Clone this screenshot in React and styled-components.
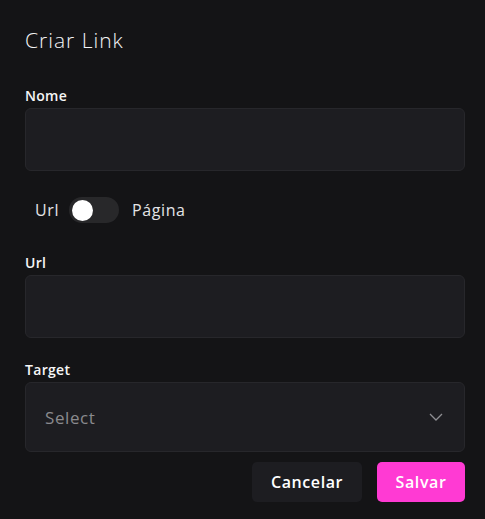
import React, { useState } from "react";
import styled, { createGlobalStyle } from "styled-components";

const Global = createGlobalStyle`
  html, body { margin: 0; padding: 0; background: #141416; }
  body { font-family: "Open Sans", "Noto Sans", sans-serif; color: #f2f2f2; }
  * { box-sizing: border-box; }
`;

const Page = styled.div`
  width: 485px;
  height: 519px;
  padding: 26px 20px 0 25px;
  display: flex;
  flex-direction: column;
`;

const Title = styled.h1`
  margin: 0;
  font-size: 21px;
  line-height: 28px;
  font-weight: 300;
  letter-spacing: 1px;
  color: #f4f4f6;
`;

const Field = styled.div`
  display: flex;
  flex-direction: column;
  gap: 2px;
  margin-top: ${(p) => p.$top}px;
`;

const Label = styled.label`
  font-size: 14px;
  line-height: 20px;
  font-weight: 600;
  letter-spacing: 0.3px;
  color: #f6f6f6;
`;

const Input = styled.input`
  width: 440px;
  height: 63px;
  background: #1d1d21;
  border: 1px solid #27272b;
  border-radius: 6px;
  outline: none;
  color: #eee;
  font: inherit;
  padding: 0 19px;
`;

const SelectBox = styled.div`
  width: 440px;
  height: 70px;
  background: #1d1d21;
  border: 1px solid #27272b;
  border-radius: 6px;
  display: flex;
  align-items: center;
  justify-content: space-between;
  padding: 0 21px 0 19px;
`;

const Placeholder = styled.span`
  font-size: 17px;
  letter-spacing: 0.6px;
  color: #8a8a8e;
`;

const ToggleRow = styled.div`
  margin-top: 26px;
  height: 26px;
  display: flex;
  align-items: center;
  padding-left: 10px;
  font-size: 16px;
  font-weight: 500;
  letter-spacing: 0.6px;
  color: #e4e4e6;
`;

const Track = styled.button`
  width: 50px;
  height: 26px;
  margin: 0 13px 0 10px;
  border-radius: 13px;
  border: none;
  background: #28282a;
  padding: 0 3px;
  display: flex;
  align-items: center;
  justify-content: ${(p) => (p.$on ? "flex-end" : "flex-start")};
  cursor: pointer;
`;

const Knob = styled.span`
  width: 21px;
  height: 21px;
  border-radius: 50%;
  background: #ffffff;
`;

const Actions = styled.div`
  margin-top: 10px;
  display: flex;
  justify-content: flex-end;
  gap: 15px;
`;

const Button = styled.button`
  height: 40px;
  width: ${(p) => p.$w}px;
  border: none;
  border-radius: 5px;
  font: inherit;
  font-size: 16px;
  font-weight: 600;
  letter-spacing: 0.6px;
  color: #fff;
  background: ${(p) => (p.$primary ? "#ff3ad3" : "#1d1d21")};
  cursor: pointer;
`;

export default function App() {
  const [on, setOn] = useState(false);
  return (
    <Page>
      <Global />
      <Title>Criar Link</Title>
      <Field $top={32}>
        <Label>Nome</Label>
        <Input />
      </Field>
      <ToggleRow>
        <span>Url</span>
        <Track $on={on} onClick={() => setOn(!on)}>
          <Knob />
        </Track>
        <span>Página</span>
      </ToggleRow>
      <Field $top={30}>
        <Label>Url</Label>
        <Input />
      </Field>
      <Field $top={22}>
        <Label>Target</Label>
        <SelectBox>
          <Placeholder>Select</Placeholder>
          <svg width="14" height="8" viewBox="0 0 14 8" fill="none">
            <path d="M1 1l6 6 6-6" stroke="#8e8e92" strokeWidth="1.3" />
          </svg>
        </SelectBox>
      </Field>
      <Actions>
        <Button $w={110}>Cancelar</Button>
        <Button $w={88} $primary>
          Salvar
        </Button>
      </Actions>
    </Page>
  );
}
